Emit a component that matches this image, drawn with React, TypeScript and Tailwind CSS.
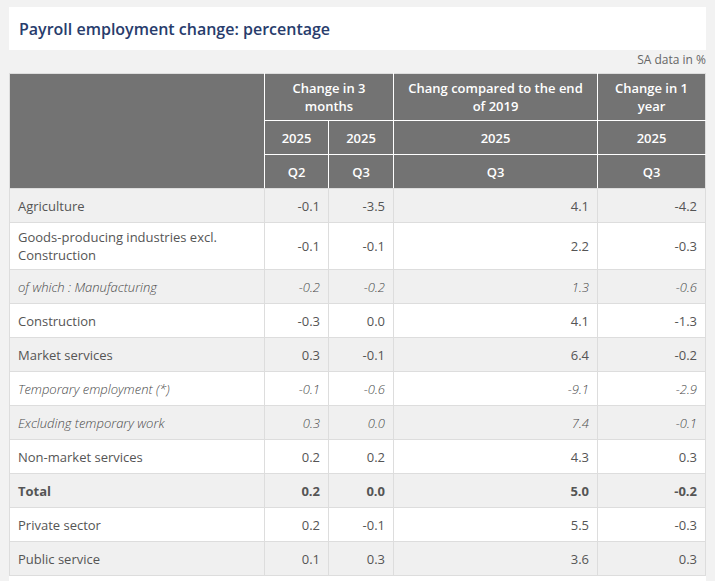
type Row = {
    label: string
    values: string[]
    style?: 'italic' | 'bold'
}

const rows: Row[] = [
    { label: 'Agriculture', values: ['-0.1', '-3.5', '4.1', '-4.2'] },
    { label: 'Goods-producing industries excl. Construction', values: ['-0.1', '-0.1', '2.2', '-0.3'] },
    { label: 'of which : Manufacturing', values: ['-0.2', '-0.2', '1.3', '-0.6'], style: 'italic' },
    { label: 'Construction', values: ['-0.3', '0.0', '4.1', '-1.3'] },
    { label: 'Market services', values: ['0.3', '-0.1', '6.4', '-0.2'] },
    { label: 'Temporary employment (*)', values: ['-0.1', '-0.6', '-9.1', '-2.9'], style: 'italic' },
    { label: 'Excluding temporary work', values: ['0.3', '0.0', '7.4', '-0.1'], style: 'italic' },
    { label: 'Non-market services', values: ['0.2', '0.2', '4.3', '0.3'] },
    { label: 'Total', values: ['0.2', '0.0', '5.0', '-0.2'], style: 'bold' },
    { label: 'Private sector', values: ['0.2', '-0.1', '5.5', '-0.3'] },
    { label: 'Public service', values: ['0.1', '0.3', '3.6', '0.3'] },
]

export default function App() {
    return (
        <div className="min-h-[581px] bg-[#f2f2f2] px-[9px] pt-[7px] font-['Open_Sans',sans-serif]">
            {/* Title */}
            <div className="bg-white h-[43px] flex items-center px-[10px]">
                <h2 className="text-[16px] font-semibold text-[#283c6c]">Payroll employment change: percentage</h2>
            </div>
            <div className="text-right text-[12px] leading-[16px] text-[#666] pt-[2px] pb-[5px]">SA data in %</div>

            {/* Table */}
            <div className="bg-white pb-[6px]">
                <table className="w-full table-fixed border-collapse text-[13px] leading-[18px]">
                    <colgroup>
                        <col className="w-[255px]" />
                        <col className="w-[64px]" />
                        <col className="w-[65px]" />
                        <col className="w-[204px]" />
                        <col />
                    </colgroup>
                    <thead className="bg-[#737373] text-white font-semibold">
                        <tr className="h-[47px]">
                            <th rowSpan={3} className="border border-[#ddd] border-r-white"></th>
                            <th colSpan={2} className="border border-white border-t-[#ddd] px-2 py-[5px] font-semibold">Change in 3 months</th>
                            <th className="border border-white border-t-[#ddd] px-2 py-[5px] font-semibold">Chang compared to the end of 2019</th>
                            <th className="border border-white border-t-[#ddd] border-r-[#ddd] px-2 py-[5px] font-semibold">Change in 1 year</th>
                        </tr>
                        <tr className="h-[34px]">
                            <th className="border border-white font-semibold">2025</th>
                            <th className="border border-white font-semibold">2025</th>
                            <th className="border border-white font-semibold">2025</th>
                            <th className="border border-white border-r-[#ddd] font-semibold">2025</th>
                        </tr>
                        <tr className="h-[34px]">
                            <th className="border border-white border-b-[#ddd] font-semibold">Q2</th>
                            <th className="border border-white border-b-[#ddd] font-semibold">Q3</th>
                            <th className="border border-white border-b-[#ddd] font-semibold">Q3</th>
                            <th className="border border-white border-b-[#ddd] border-r-[#ddd] font-semibold">Q3</th>
                        </tr>
                    </thead>
                    <tbody>
                        {rows.map((row, i) => (
                            <tr
                                key={row.label}
                                className={
                                    (i % 2 === 0 ? 'bg-[#f0f0f0] ' : 'bg-white ') +
                                    (row.style === 'italic'
                                        ? 'italic font-light text-[#4a4a4a]'
                                        : row.style === 'bold'
                                        ? 'font-bold text-[#555]'
                                        : 'text-[#555]')
                                }
                            >
                                <td className="h-[34px] border border-[#ddd] px-2 py-[5px]">{row.label}</td>
                                {row.values.map((v, j) => (
                                    <td key={j} className="h-[34px] border border-[#ddd] px-2 py-[5px] text-right">
                                        {v}
                                    </td>
                                ))}
                            </tr>
                        ))}
                    </tbody>
                </table>
            </div>
        </div>
    )
}
